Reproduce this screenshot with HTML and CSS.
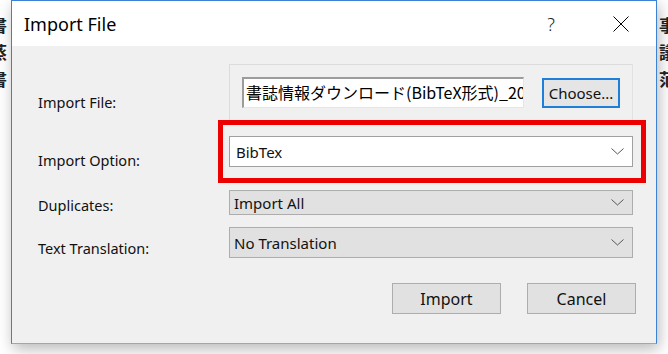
FILE: index.html
```html
<!DOCTYPE html>
<html lang="en">
<head>
  <meta charset="UTF-8" />
  <title>Import File</title>
  <link rel="stylesheet" href="styles.css">
</head>
<body>

  <!-- Page behind the dialog -->
  <div class="page">
    <div class="page-line"><span>書</span><span>事</span></div>
    <div class="page-line"><span>蒸</span><span>議</span></div>
    <div class="page-line"><span>書</span><span>范</span></div>
  </div>

  <!-- Dialog -->
  <div class="dialog">
    <div class="titlebar">
      <span class="title">Import File</span>
      <span class="help">?</span>
      <svg class="close" width="16" height="16" viewBox="0 0 16 16">
        <path d="M0.5 0.5 L15.5 15.5 M15.5 0.5 L0.5 15.5" stroke="#000" stroke-width="1" fill="none"/>
      </svg>
    </div>

    <div class="dialog-body">
      <div class="row">
        <label class="label label-file">Import File:</label>
        <div class="file-panel">
          <div class="file-input">書誌情報ダウンロード(BibTeX形式)_2018</div>
          <button class="choose-btn">Choose...</button>
        </div>
      </div>

      <div class="row row-option">
        <label class="label label-option">Import Option:</label>
        <div class="highlight">
          <div class="select select-white">
            <span>BibTex</span>
            <svg width="13" height="7" viewBox="0 0 13 7"><path d="M0.5 0.5 L6.5 6 L12.5 0.5" stroke="#555" fill="none"/></svg>
          </div>
        </div>
      </div>

      <div class="row row-dup">
        <label class="label">Duplicates:</label>
        <div class="select select-short">
          <span>Import All</span>
          <svg width="13" height="7" viewBox="0 0 13 7"><path d="M0.5 0.5 L6.5 6 L12.5 0.5" stroke="#555" fill="none"/></svg>
        </div>
      </div>

      <div class="row row-trans">
        <label class="label">Text Translation:</label>
        <div class="select">
          <span>No Translation</span>
          <svg width="13" height="7" viewBox="0 0 13 7"><path d="M0.5 0.5 L6.5 6 L12.5 0.5" stroke="#555" fill="none"/></svg>
        </div>
      </div>

      <div class="actions">
        <button class="btn">Import</button>
        <button class="btn">Cancel</button>
      </div>
    </div>
  </div>

</body>
</html>
```

FILE: styles.css
```css
* {
  box-sizing: border-box;
  margin: 0;
  padding: 0;
}

body {
  width: 668px;
  height: 354px;
  overflow: hidden;
  background: #fff;
  font-family: "Noto Sans", "Noto Sans CJK JP", sans-serif;
  position: relative;
}

/* Page behind */
.page {
  padding-top: 12px;
  font-family: "Noto Sans CJK JP", sans-serif;
  font-size: 17px;
  font-weight: bold;
  color: #222;
}

.page-line {
  display: flex;
  justify-content: space-between;
  margin: 0 -8px 0 -10px;
  height: 27px;
}

/* Dialog */
.dialog {
  position: absolute;
  left: 11px;
  top: 0;
  width: 646px;
  height: 344px;
  border: 1px solid #3b82d4;
  border-bottom-color: #9aa7b5;
  background: #f0f0f0;
  box-shadow: 2px 5px 14px rgba(0, 0, 0, 0.28);
}

.titlebar {
  height: 45px;
  background: #fff;
  display: flex;
  align-items: center;
  padding-left: 12px;
}

.title {
  font-size: 18px;
  color: #000;
  flex: 1;
  padding-top: 1px;
}

.help {
  font-size: 18px;
  font-weight: 300;
  color: #222;
  margin-right: 58px;
}

.close {
  margin-right: 27px;
}

.dialog-body {
  padding: 18px 0 0 26px;
}

.row {
  display: grid;
  grid-template-columns: 191px 404px;
}

.label {
  font-size: 14.5px;
  line-height: 19px;
  color: #111;
  align-self: end;
}

.label-file {
  padding-bottom: 8px;
}

.label-option {
  padding-bottom: 13px;
}

/* Import file panel */
.file-panel {
  height: 56px;
  width: 404px;
  border: 1px solid #dcdcdc;
  border-bottom: none;
  border-right-color: #e2e2e2;
  display: flex;
  align-items: flex-start;
  padding: 12px 0 0 12px;
}

.file-input {
  width: 282px;
  height: 31px;
  background: #fff;
  border-top: 2px solid #9c9c9c;
  border-left: 2px solid #9c9c9c;
  border-right: 1px solid #e6e6e6;
  border-bottom: 1px solid #e6e6e6;
  font-family: "Noto Sans CJK JP", sans-serif;
  font-size: 16px;
  line-height: 27px;
  padding-left: 2px;
  white-space: nowrap;
  overflow: hidden;
  color: #000;
}

.choose-btn {
  margin-left: 18px;
  margin-top: 1px;
  width: 78px;
  height: 30px;
  border: 2px solid #1d7fd8;
  background: #e5e5e5;
  font-family: "Noto Sans", sans-serif;
  font-size: 15px;
  color: #111;
}

/* Red highlight around the option select */
.highlight {
  border: 5px solid #ec0000;
  margin: 0 -13px 0 -11px;
  padding: 11px 8px 11px 6px;
}

.select {
  height: 31px;
  background: #e1e1e1;
  border: 1px solid #adadad;
  display: flex;
  align-items: center;
  justify-content: space-between;
  padding: 0 8px 0 4px;
  font-size: 15px;
  color: #111;
}

.select-white {
  background: #fff;
  border-color: #a0a0a0;
  padding-left: 6px;
}

.select-short {
  height: 25px;
}

.row-dup {
  margin-top: 7px;
}

.row-trans {
  margin-top: 12px;
}

/* Buttons */
.actions {
  display: flex;
  justify-content: flex-end;
  gap: 26px;
  margin-top: 25px;
  padding-right: 20px;
}

.btn {
  width: 109px;
  height: 31px;
  background: #e1e1e1;
  border: 1px solid #adadad;
  font-family: "Noto Sans", sans-serif;
  font-size: 16px;
  color: #111;
}
```
